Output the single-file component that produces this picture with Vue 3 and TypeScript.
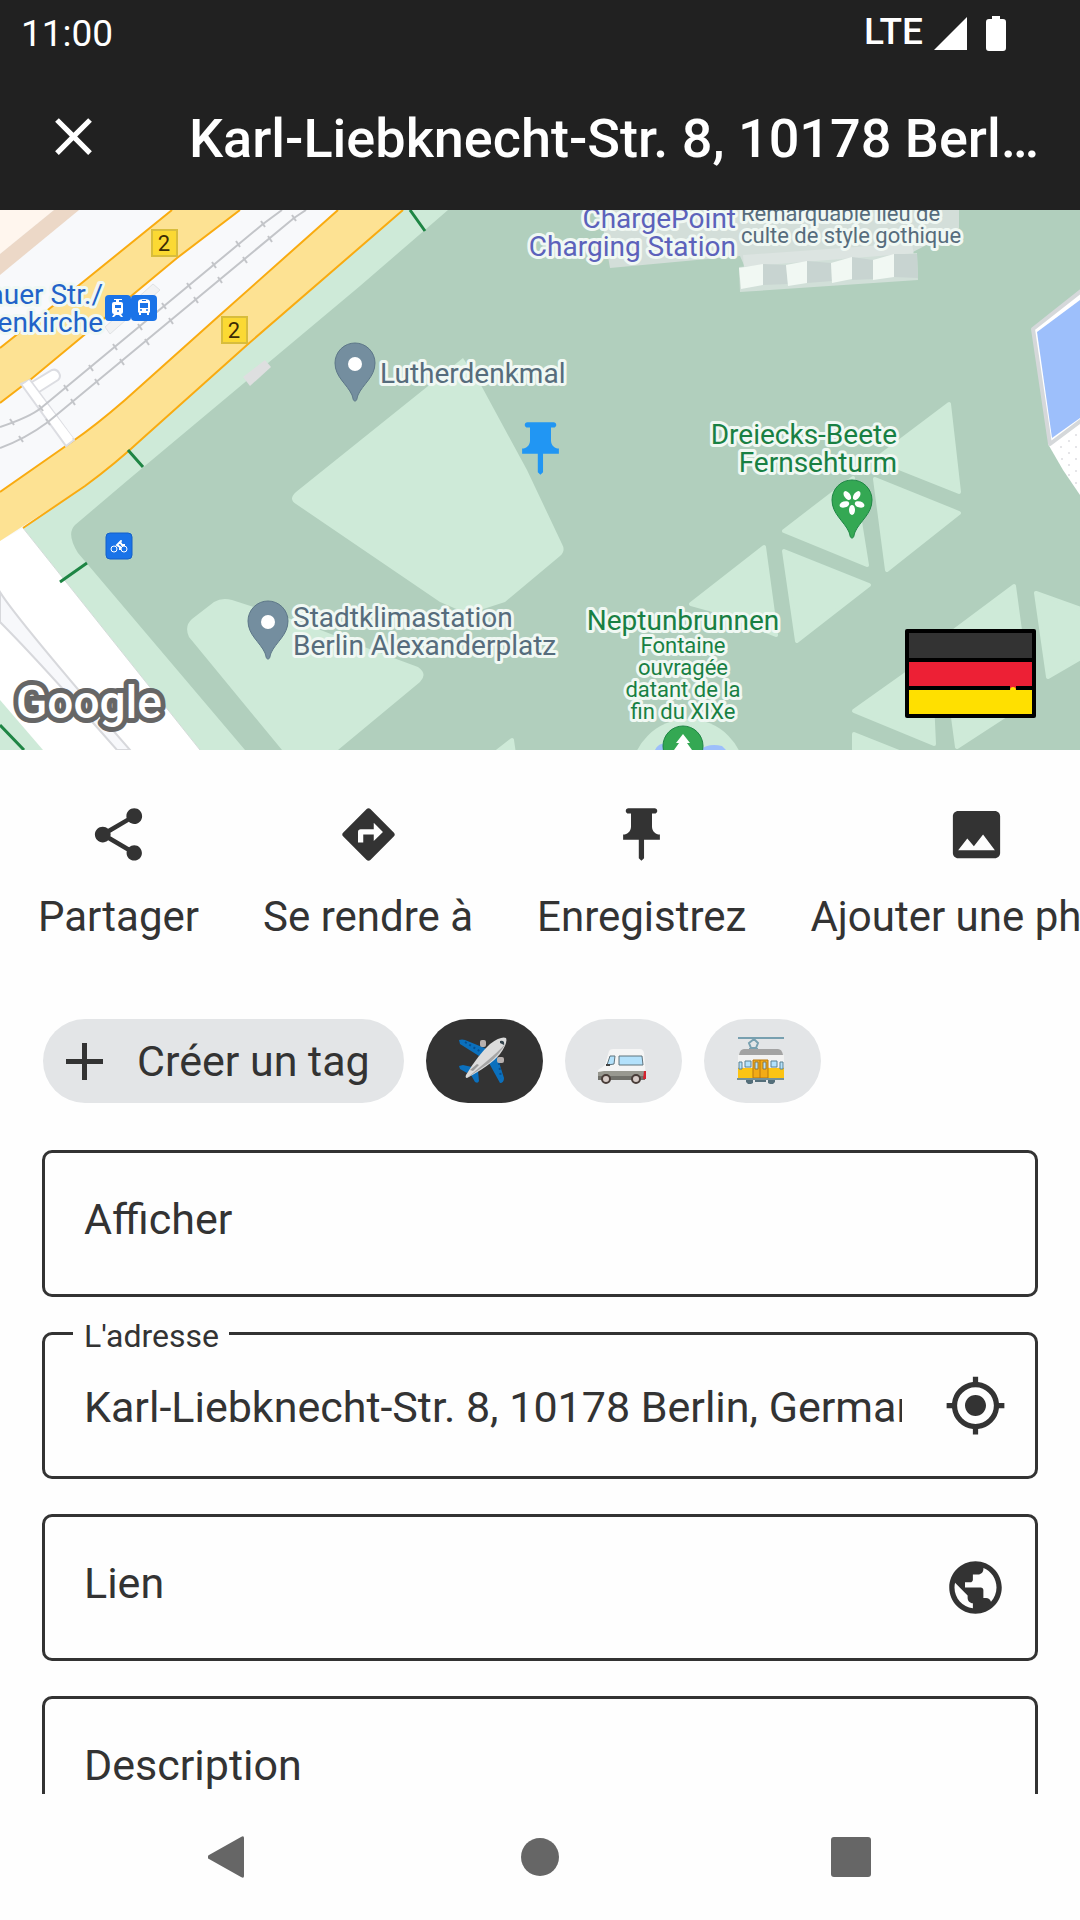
<script setup lang="ts">
import { ref } from 'vue'

interface Action {
  label: string
  path: string
}

interface Point {
  x: number
  y: number
}

const address = ref('Karl-Liebknecht-Str. 8, 10178 Berlin, Germany')
const displayName = ref('')
const link = ref('')
const description = ref('')
const selectedTag = ref('plane')

const pushPin =
  'M16 9V4h1c.55 0 1-.45 1-1s-.45-1-1-1H7c-.55 0-1 .45-1 1s.45 1 1 1h1v5c0 1.66-1.34 3-3 3v2h5.97v7l1 1 1-1v-7H19v-2c-1.66 0-3-1.34-3-3z'

const actions: Action[] = [
  {
    label: 'Partager',
    path: 'M18 16.08c-.76 0-1.44.3-1.96.77L8.91 12.7c.05-.23.09-.46.09-.7s-.04-.47-.09-.7l7.05-4.11c.54.5 1.25.81 2.04.81 1.66 0 3-1.34 3-3s-1.34-3-3-3-3 1.34-3 3c0 .24.04.47.09.7L8.04 9.81C7.5 9.31 6.79 9 6 9c-1.66 0-3 1.34-3 3s1.34 3 3 3c.79 0 1.5-.31 2.04-.81l7.12 4.16c-.05.21-.08.43-.08.65 0 1.61 1.31 2.92 2.92 2.92s2.92-1.31 2.92-2.92-1.31-2.92-2.92-2.92z',
  },
  {
    label: 'Se rendre à',
    path: 'M21.71 11.29l-9-9c-.39-.39-1.02-.39-1.41 0l-9 9c-.39.39-.39 1.02 0 1.41l9 9c.39.39 1.02.39 1.41 0l9-9c.39-.38.39-1.01 0-1.41zM14 14.5V12h-4v3H8v-4c0-.55.45-1 1-1h5V7.5l3.5 3.5-3.5 3.5z',
  },
  { label: 'Enregistrez', path: pushPin },
  {
    label: 'Ajouter une photo',
    path: 'M21 19V5c0-1.1-.9-2-2-2H5c-1.1 0-2 .9-2 2v14c0 1.1.9 2 2 2h14c1.1 0 2-.9 2-2zM8.5 13.5l2.5 3.01L14.5 12l4.5 6H5l3.5-4.5z',
  },
]

const flowerBeds: string[] = [
  '949,404 959,492 876,459',
  '875,479 959,513 887,570',
  '784,531 853,478 867,565',
  '691,604 764,547 776,635 720,612',
  '784,551 869,585 797,641',
  '1014,586 1024,660 935,645',
  '1036,593 1084,610 1084,656 1048,677',
  '854,711 930,657 934,744',
  '854,734 904,754 854,754',
  '946,665 1034,697 957,747',
  '512,740 514,754 494,754',
]

const railTies: Point[] = [
  { x: 263, y: 224 }, { x: 238, y: 244 }, { x: 214, y: 265 }, { x: 189, y: 286 },
  { x: 164, y: 306 }, { x: 140, y: 327 }, { x: 115, y: 347 }, { x: 91, y: 368 },
  { x: 66, y: 388 }, { x: 41, y: 408 }, { x: 12, y: 422 },
  { x: 294, y: 218 }, { x: 270, y: 239 }, { x: 245, y: 260 }, { x: 220, y: 280 },
  { x: 196, y: 300 }, { x: 171, y: 321 }, { x: 147, y: 342 }, { x: 122, y: 362 },
  { x: 97, y: 382 }, { x: 73, y: 402 }, { x: 48, y: 422 }, { x: 21, y: 439 },
]

const petals: number[] = [36, 108, 180, 252, 324]
</script>

<template>
  <div class="screen">
    <div class="status-bar">
      <span>11:00</span>
      <div class="status-right">
        <span class="network">LTE</span>
        <svg class="signal" viewBox="0 0 34 34" aria-hidden="true"><path d="M34 0V34H0z" /></svg>
        <svg class="battery" viewBox="0 0 20 35" aria-hidden="true">
          <path d="M6 0h8v3h3a3 3 0 0 1 3 3v26a3 3 0 0 1-3 3H3a3 3 0 0 1-3-3V6a3 3 0 0 1 3-3h3z" />
        </svg>
      </div>
    </div>

    <header class="app-bar">
      <button class="icon-button" type="button" aria-label="Fermer">
        <svg class="icon" viewBox="0 0 24 24"><path d="M19 6.41 17.59 5 12 10.59 6.41 5 5 6.41 10.59 12 5 17.59 6.41 19 12 13.41 17.59 19 19 17.59 13.41 12z" /></svg>
      </button>
      <h1 class="title">{{ address }}</h1>
    </header>

    <section class="map">
      <svg class="map-canvas" viewBox="0 210 1080 540" preserveAspectRatio="xMidYMid slice">
        <rect y="210" width="1080" height="540" fill="#f8f9fb" />
        <path d="M0 210H54L0 254z" fill="#fff6ee" />
        <path d="M54 210H79L0 275V254z" fill="#ecd8c7" />

        <!-- park -->
        <path d="M403 210H1080V750H200L23 528 93 480 143 438 247 345z" fill="#ceead8" />
        <path d="M448 210H1080V750H245L78 553Q66 534 75 525L128 480 360 286z" fill="#b1cfbd" />
        <path d="M338 750 420 682Q428 674 418 667L372 650 300 622 232 600Q222 597 214 602L192 619Q184 626 189 637L282 750z" fill="#ceead8" />
        <path d="M463 358 296 492Q288 499 296 504L440 602 468 614 505 602 560 556Q566 551 562 544L527 470 482 387z" fill="#ceead8" />
        <g fill="#ceead8" stroke="#ceead8" stroke-width="4" stroke-linejoin="round">
          <polygon v-for="bed in flowerBeds" :key="bed" :points="bed" />
        </g>
        <circle cx="688" cy="776" r="57" fill="#ceead8" />
        <path d="M655 750Q658 742 670 743V750zM700 750Q708 743 722 746L726 750z" fill="#9dbffb" />

        <!-- church -->
        <path d="M600 210H959V228L913 252 744 265 740 256 610 268z" fill="#d3ded9" />
        <path d="M743 255 912 243 914 256 744 268z" fill="#dce4e1" />
        <path d="M739 267 917 253 918 280 740 292z" fill="#d1dfd8" />
        <path d="M763 264 786 265 788 284 763 285zM807 261 831 263 832 281 807 283zM852 257 873 260 873 279 852 280zM894 254 917 254 918 278 894 277z" fill="#c8d4d1" />
        <path d="M739 268 763 264V285L741 289zM786 265 807 261V283L788 286zM831 263 852 257V279L832 283zM873 260 894 254V277L873 280z" fill="#f1f8f3" />

        <!-- square on the right -->
        <path d="M1048 444 1082 420V498L1063 470z" fill="#fff" />
        <g fill="#dcdde0">
          <circle cx="1061" cy="447" r="1" /><circle cx="1069" cy="441" r="1" /><circle cx="1076" cy="447" r="1" />
          <circle cx="1069" cy="453" r="1" /><circle cx="1062" cy="459" r="1" /><circle cx="1076" cy="459" r="1" />
          <circle cx="1069" cy="465" r="1" /><circle cx="1076" cy="471" r="1" /><circle cx="1069" cy="475" r="1" />
          <circle cx="1076" cy="483" r="1" /><circle cx="1076" cy="435" r="1" />
        </g>
        <path d="M1090 284 1033 329 1050 444 1090 414z" fill="#fff" stroke="#d5d8da" stroke-width="4" stroke-linejoin="round" />
        <path d="M1080 300 1037 332 1052 438 1080 418z" fill="#9dbffb" />

        <!-- street at the bottom left -->
        <path d="M0 541 23 528 200 750H0z" fill="#fff" />
        <path d="M23 528 200 750" stroke="#d3dbd8" fill="none" />
        <path d="M0 592Q16 618 130 750H117Q40 662 0 622z" fill="#f7f8fb" stroke="#d7d8dc" stroke-width="2" />
        <path d="M0 700 43 750H0z" fill="#ceead8" />

        <!-- main road -->
        <path d="M172 210H240L177 258 30 380 0 403V348L83 282z" fill="#fde293" />
        <path d="M338 210H403L247 345 143 438Q115 464 85 486L0 541V492L73 441Q95 426 125 400L220 315z" fill="#fde293" />
        <g fill="none" stroke="#f9ab10" stroke-width="2">
          <path d="M172 210 83 282 0 348" />
          <path d="M240 210 177 258 30 380 0 403" />
          <path d="M338 210 220 315 125 400Q95 426 73 441L0 492" />
          <path d="M403 210 247 345 143 438Q115 464 85 486L23 528" />
        </g>

        <!-- tram platform and tracks -->
        <path d="M105 327 153 284 160 290 110 334z" fill="#f1f2f3" stroke="#e1e3e5" />
        <path d="M27 385 52 370A6 6 0 0 1 58 380L36 394M21 384 66 446 74 440 30 380z" fill="#fff" stroke="#dcdde2" stroke-width="2" />
        <path d="M24 384 29 380 73 438 67 443z" fill="#fff" />
        <g fill="none" stroke="#c3c5c9" stroke-width="2">
          <path d="M282 210 263 224 41 408Q30 417 0 427" />
          <path d="M306 210 294 218 48 422Q25 439 0 448" />
        </g>
        <g stroke="#c3c5c9" stroke-width="2">
          <line v-for="tie in railTies" :key="`${tie.x}-${tie.y}`" :x1="tie.x - 2" :y1="tie.y - 3" :x2="tie.x + 2" :y2="tie.y + 3" />
        </g>
        <path d="M243 377 265 360 271 367 250 386z" fill="#dedfe0" />

        <g stroke="#1e8544" stroke-width="3">
          <path d="M128 450 143 467M410 210 425 231M60 582 87 563M0 725 24 750" />
        </g>

        <!-- road shields -->
        <g fill="#fbd933" stroke="#d8bd3c" stroke-width="2">
          <rect x="152" y="230" width="25" height="26" />
          <rect x="222" y="317" width="25" height="26" />
        </g>
        <g class="shield-text">
          <text x="164" y="251">2</text>
          <text x="234" y="338">2</text>
        </g>

        <!-- transit badges -->
        <g fill="#1a73e8">
          <rect x="105" y="295" width="26" height="26" rx="4" />
          <rect x="131" y="295" width="26" height="26" rx="4" />
          <rect x="106" y="533" width="26" height="26" rx="4" stroke="#1561c8" />
        </g>
        <path d="M114 299h8v1h-3v2h2q2 0 2 2v8q0 2-2 2l2 3h-2l-2-2h-3l-2 2h-2l2-3q-2 0-2-2v-8q0-2 2-2h2v-2h-2zM115 305v3h6v-3z" fill="#fff" fill-rule="evenodd" />
        <circle cx="118" cy="311" r="1" fill="#1a73e8" />
        <path d="M138 302q0-3 6-3t6 3v10l-1 1v2h-2v-2h-6v2h-2v-2l-1-1zM140 303v5h8v-5zM142 300h4v1h-4z" fill="#fff" fill-rule="evenodd" />
        <circle cx="141" cy="310" r="1" fill="#1a73e8" /><circle cx="147" cy="310" r="1" fill="#1a73e8" />
        <g fill="none" stroke="#fff">
          <circle cx="114" cy="549" r="3" /><circle cx="124" cy="549" r="3" />
          <path d="M120 550V547L117 545 120 542 122 545H125" stroke-width="2" />
        </g>
        <circle cx="121" cy="541" r="1" fill="#fff" />

        <!-- place pins -->
        <g fill="#748e9f" stroke="#5d7788" stroke-width="1">
          <path d="M355 401C353 401 353 398 352 395 347 384 335 377 335 363A20 20 0 0 1 375 363C375 377 363 384 358 395 357 398 357 401 355 401z" />
          <path d="M268 659C266 659 266 656 265 653 260 642 248 635 248 621A20 20 0 0 1 288 621C288 635 276 642 271 653 270 656 270 659 268 659z" />
        </g>
        <circle cx="355" cy="364" r="7" fill="#fff" />
        <circle cx="268" cy="622" r="7" fill="#fff" />
        <path d="M852 538C850 538 850 535 849 532 844 521 832 514 832 500A20 20 0 0 1 872 500C872 514 860 521 855 532 854 535 854 538 852 538z" fill="#34a853" stroke="#1e8544" />
        <g fill="#fff">
          <ellipse v-for="angle in petals" :key="angle" cx="852" cy="494" rx="3" ry="5" :transform="`rotate(${angle} 852 502)`" />
        </g>
        <circle cx="683" cy="746" r="20" fill="#34a853" stroke="#1e8544" />
        <path d="M683 734 690 743H687L692 750H674L679 743H676z" fill="#fff" />

        <svg x="509" y="417" width="63" height="63" viewBox="0 0 24 24"><path :d="pushPin" fill="#2196f3" /></svg>

        <g class="poi">
          <g class="transit end"><text x="103" y="304">auer Str./</text><text x="103" y="332">enkirche</text></g>
          <g class="violet end"><text x="736" y="228">ChargePoint</text><text x="736" y="256">Charging Station</text></g>
          <g class="slate small"><text x="741" y="221">Remarquable lieu de</text><text x="741" y="243">culte de style gothique</text></g>
          <g class="slate">
            <text x="380" y="383">Lutherdenkmal</text>
            <text x="293" y="627">Stadtklimastation</text><text x="293" y="655">Berlin Alexanderplatz</text>
          </g>
          <g class="green end"><text x="897" y="444">Dreiecks-Beete</text><text x="897" y="472">Fernsehturm</text></g>
          <g class="green middle"><text x="683" y="630">Neptunbrunnen</text></g>
          <g class="green middle small">
            <text x="683" y="653">Fontaine</text><text x="683" y="675">ouvragée</text>
            <text x="683" y="697">datant de la</text><text x="683" y="719">fin du XIXe</text>
          </g>
        </g>
        <text class="google" x="16" y="718">Google</text>
      </svg>

      <svg class="flag" viewBox="0 0 131 89" role="img" aria-label="Allemagne">
        <rect width="131" height="89" rx="2" />
        <rect x="4" y="4" width="123" height="25" fill="#333" />
        <rect x="4" y="33" width="123" height="24" fill="#ed2035" />
        <rect x="4" y="61" width="123" height="24" fill="#ffe000" />
        <path d="M105 56H111V60H105z" fill="#ed2035" />
        <path d="M105 61Q105 58 108 58T111 61z" fill="#ffe000" />
      </svg>
    </section>

    <main class="content">
      <nav class="actions" aria-label="Actions">
        <button v-for="action in actions" :key="action.label" class="action" type="button">
          <svg class="icon" viewBox="0 0 24 24"><path :d="action.path" /></svg>
          <span>{{ action.label }}</span>
        </button>
      </nav>

      <div class="tags">
        <button class="chip chip-create" type="button">
          <svg class="plus" viewBox="0 0 37 37"><path d="M16 0h5v16h16v5H21v16h-5V21H0v-5h16z" /></svg>
          <span>Créer un tag</span>
        </button>
        <button class="chip" :class="{ selected: selectedTag === 'plane' }" type="button" aria-label="Avion" @click="selectedTag = 'plane'">
          <svg class="emoji" viewBox="0 0 48 48">
            <path d="M0 3Q3 2 6 3L28 12 20 19 1 7zM30 26 38 19 45 41Q45 46 41 46zM0 29 4 28 13 30 8 36 1 32zM19 34 20 44Q19 47 16 45L12 38z" fill="#0b70bd" />
            <path d="M6 5 22 15M40 26 42 41" stroke="#064f91" stroke-width="2" stroke-dasharray="2 3" />
            <rect x="21" y="3" width="6" height="7" rx="2" fill="#b7b0ae" /><rect x="38" y="20" width="7" height="6" rx="2" fill="#b7b0ae" />
            <path d="M47 1Q49 6 41 17 32 28 8 41 6 41 7 38 19 18 31 7 42-1 47 1z" fill="#dcdcdc" />
            <path d="M47 6Q40 18 30 26L8 41 28 24Q40 14 47 6z" fill="#a5a5a5" />
            <path d="M11 33 18 27 20 28 14 34z" fill="#9a9a9a" />
            <path d="M41 4Q46 3 45 8L43 7 41 6z" fill="#33434c" />
          </svg>
        </button>
        <button class="chip" :class="{ selected: selectedTag === 'van' }" type="button" aria-label="Minibus" @click="selectedTag = 'van'">
          <svg class="emoji" viewBox="0 0 48 48">
            <path d="M11 14Q12 12 15 12H42Q45 12 46 16L48 41H0V34Q0 32 3 31L7 28z" fill="#f5f5f5" />
            <path d="M9 28 12 19H17L16 27 10 28zM21 19H44L45 28H21z" fill="#b3e1fb" stroke="#60747d" />
            <path d="M0 35 6 34H47V42H0z" fill="#989890" />
            <path d="M0 39H47V43H0z" fill="#71716b" />
            <path d="M46 34H48V42H45z" fill="#d3232f" />
            <path d="M8 27H12V29H8z" fill="#424242" />
            <circle cx="8" cy="42" r="4" fill="#d7ccc8" stroke="#493d39" stroke-width="2" />
            <circle cx="38" cy="42" r="4" fill="#d7ccc8" stroke="#493d39" stroke-width="2" />
          </svg>
        </button>
        <button class="chip" :class="{ selected: selectedTag === 'tram' }" type="button" aria-label="Tramway" @click="selectedTag = 'tram'">
          <svg class="emoji" viewBox="0 0 48 48">
            <path d="M1 1H47M12 12H21M14 11 12 6 17 2 21 6 19 11M14 11H19" fill="none" stroke="#78a0b0" stroke-width="2" />
            <path d="M2 18Q3 12 7 12H41Q45 12 46 18z" fill="#a3a3a3" />
            <path d="M1 18H47V30H1z" fill="#f2f2f2" />
            <path d="M1 31H47V42H1z" fill="#fcc414" />
            <path d="M2 25H5V32H2zM8 24H14V30H8zM34 24H40V30H34zM43 25H46V32H43z" fill="#b3e1fb" stroke="#5a8294" />
            <path d="M16 23H31V41H16z" fill="#f2ab16" stroke="#b9770c" />
            <path d="M23 23V41" stroke="#b9770c" />
            <path d="M18 25H21V32H18zM26 25H29V32H26z" fill="#b3e1fb" stroke="#8c7644" />
            <path d="M0 42H47" stroke="#759199" stroke-width="2" />
            <path d="M9 43H16V46L14 47H11L9 45zM31 43H38V45L36 47H33L31 46zM18 43H29V45H18z" fill="#546e7a" />
          </svg>
        </button>
      </div>

      <form class="form" @submit.prevent>
        <div class="field">
          <label for="display">Afficher</label>
          <input id="display" v-model="displayName" type="text" />
        </div>
        <div class="field filled">
          <label for="address">L'adresse</label>
          <input id="address" v-model="address" type="text" />
          <button class="icon-button" type="button" aria-label="Ma position">
            <svg class="icon" viewBox="0 0 24 24"><path d="M12 8c-2.21 0-4 1.79-4 4s1.79 4 4 4 4-1.79 4-4-1.79-4-4-4zm8.94 3A8.994 8.994 0 0 0 13 3.06V1h-2v2.06A8.994 8.994 0 0 0 3.06 11H1v2h2.06A8.994 8.994 0 0 0 11 20.94V23h2v-2.06A8.994 8.994 0 0 0 20.94 13H23v-2h-2.06zM12 19c-3.87 0-7-3.13-7-7s3.13-7 7-7 7 3.13 7 7-3.13 7-7 7z" /></svg>
          </button>
        </div>
        <div class="field">
          <label for="link">Lien</label>
          <input id="link" v-model="link" type="text" />
          <button class="icon-button" type="button" aria-label="Ouvrir le lien">
            <svg class="icon" viewBox="0 0 24 24"><path d="M12 2C6.48 2 2 6.48 2 12s4.48 10 10 10 10-4.48 10-10S17.52 2 12 2zm-1 17.93c-3.95-.49-7-3.85-7-7.93 0-.62.08-1.21.21-1.79L9 15v1c0 1.1.9 2 2 2v1.93zm6.9-2.54c-.26-.81-1-1.39-1.9-1.39h-1v-3c0-.55-.45-1-1-1H8v-2h2c.55 0 1-.45 1-1V7h2c1.1 0 2-.9 2-2v-.41c2.93 1.19 5 4.06 5 7.41 0 2.08-.8 3.97-2.1 5.39z" /></svg>
          </button>
        </div>
        <div class="field">
          <label for="description">Description</label>
          <input id="description" v-model="description" type="text" />
        </div>
      </form>
    </main>

    <nav class="system-nav" aria-label="Navigation système">
      <button type="button" aria-label="Retour"><svg viewBox="0 0 42 42"><path d="M36 2V40Q36 43 33 41L1 23Q-2 21 1 19L33 1Q36-1 36 2z" /></svg></button>
      <button type="button" aria-label="Accueil"><svg viewBox="0 0 42 42"><circle cx="21" cy="21" r="19" /></svg></button>
      <button type="button" aria-label="Applications récentes"><svg viewBox="0 0 42 42"><rect x="1" y="1" width="40" height="40" rx="3" /></svg></button>
    </nav>
  </div>
</template>

<style>
body {
  margin: 0;
  background: #fefefe;
}
</style>

<style scoped>
.screen {
  display: flex;
  flex-direction: column;
  height: 100vh;
  overflow: hidden;
  color: #333;
  background: #fefefe;
  font-family: Roboto, 'Liberation Sans', sans-serif;
  font-size: 43px;
  line-height: 50px;
}

button,
input {
  margin: 0;
  padding: 0;
  border: 0;
  color: inherit;
  background: none;
  font: inherit;
}

svg {
  display: block;
  flex: none;
}

.icon {
  width: 63px;
  height: 63px;
  fill: currentColor;
}

.icon-button {
  flex: none;
}

.status-bar {
  display: flex;
  flex: none;
  align-items: center;
  justify-content: space-between;
  box-sizing: border-box;
  height: 63px;
  padding: 4px 74px 0 21px;
  color: #fff;
  background: #212121;
  font-size: 37px;
}

.status-right {
  display: flex;
  align-items: center;
}

.network {
  margin-top: -4px;
  font-weight: 500;
}

.signal {
  width: 33px;
  height: 33px;
  margin-left: 11px;
  fill: #fff;
}

.battery {
  width: 20px;
  height: 35px;
  margin-left: 19px;
  fill: #fff;
}

.app-bar {
  display: flex;
  flex: none;
  gap: 80px;
  align-items: center;
  box-sizing: border-box;
  height: 147px;
  padding: 0 32px 0 42px;
  color: #fff;
  background: #212121;
}

.title {
  flex: 1;
  min-width: 0;
  margin: 0;
  padding: 4px 0 0 4px;
  overflow: hidden;
  font-size: 54px;
  font-weight: 500;
  line-height: 64px;
  text-overflow: ellipsis;
  white-space: nowrap;
}

.map {
  position: relative;
  flex: none;
  height: 540px;
}

.map-canvas {
  width: 100%;
  height: 100%;
}

.poi {
  font-size: 28px;
  paint-order: stroke;
  stroke: #f0f8f3;
  stroke-width: 6px;
  stroke-linejoin: round;
}

.small { font-size: 22px; }
.end { text-anchor: end; }
.middle { text-anchor: middle; }
.transit { fill: #2163c9; }
.violet { fill: #5c62bb; }
.slate { fill: #566c7c; }
.green { fill: #188043; }

.shield-text {
  fill: #3c2b05;
  font-size: 22px;
  text-anchor: middle;
}

.google {
  fill: #fff;
  stroke: #666;
  stroke-width: 10px;
  stroke-linejoin: round;
  paint-order: stroke;
  font-size: 46px;
  font-weight: 500;
}

.flag {
  position: absolute;
  right: 44px;
  bottom: 32px;
  width: 131px;
  height: 89px;
}

.content {
  flex: 1;
  min-height: 0;
  overflow: hidden;
}

.actions {
  display: flex;
  padding: 53px 6px 0;
  overflow: hidden;
}

.action {
  display: flex;
  flex: none;
  flex-direction: column;
  gap: 26px;
  align-items: center;
  padding: 0 32px;
  font-size: 42px;
  white-space: nowrap;
}

.tags {
  display: flex;
  gap: 22px;
  padding: 77px 43px 0;
}

.chip {
  display: flex;
  align-items: center;
  justify-content: center;
  box-sizing: border-box;
  width: 117px;
  height: 84px;
  padding-right: 3px;
  border-radius: 42px;
  background: #e3e5e7;
}

.chip.selected {
  background: #333;
}

.chip-create {
  gap: 34px;
  justify-content: flex-start;
  width: 361px;
  padding-left: 23px;
  white-space: nowrap;
}

.plus {
  width: 37px;
  height: 37px;
  fill: #333;
}

.emoji {
  width: 48px;
  height: 48px;
}

.form {
  display: flex;
  flex-direction: column;
  gap: 35px;
  padding: 47px 42px 0;
}

.field {
  position: relative;
  display: flex;
  gap: 42px;
  align-items: center;
  box-sizing: border-box;
  height: 147px;
  padding: 0 28px 0 39px;
  border: 3px solid #333;
  border-radius: 10px;
}

.field input {
  flex: 1;
  min-width: 0;
  height: 60px;
  padding-top: 2px;
  outline: 0;
}

.field label {
  position: absolute;
  top: 41px;
  left: 39px;
  pointer-events: none;
}

.field.filled label {
  top: -18px;
  left: 28px;
  padding: 0 10px 0 11px;
  background: #fefefe;
  font-size: 32px;
  line-height: 38px;
}

.system-nav {
  display: grid;
  flex: none;
  grid-template-columns: repeat(3, 1fr);
  height: 126px;
  padding: 0 73px;
}

.system-nav button {
  display: flex;
  align-items: center;
  justify-content: center;
}

.system-nav svg {
  width: 42px;
  height: 42px;
  fill: #666;
}
</style>
